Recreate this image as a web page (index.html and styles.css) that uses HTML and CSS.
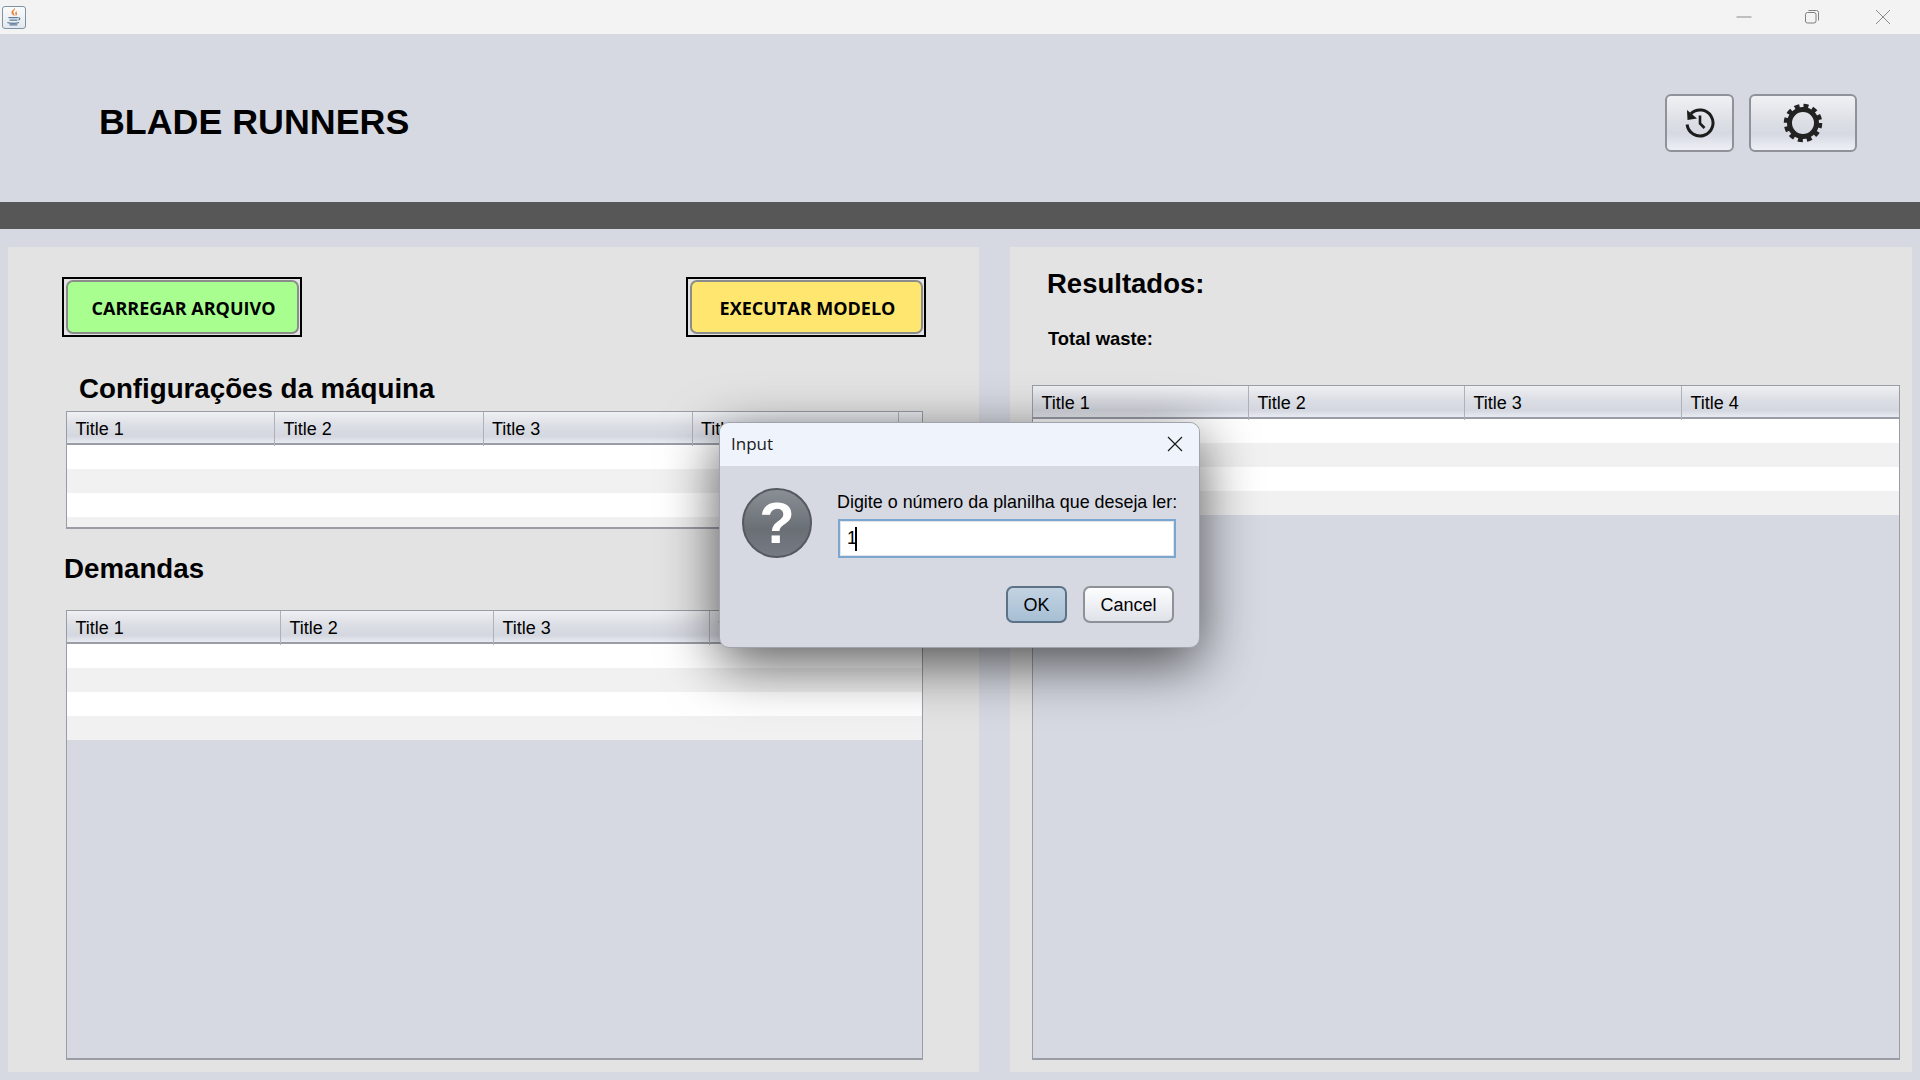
FILE: index.html
```html
<!DOCTYPE html>
<html lang="en">
<head>
    <meta charset="UTF-8">
    <title>Blade Runners</title>
    <link rel="stylesheet" href="styles.css">
</head>
<body>
    <div class="title-bar">
        <div class="app-icon">
            <svg width="20" height="20" viewBox="0 0 18 18">
                <path d="M9.500 0.500c1.500 2-2 3-1 5 .4.800 1 1.300 1 2.500-1.200-.4-3-1.700-2.700-3.500C7.100 3 9.800 2.300 9.500 0.500z" fill="#e8792b"/>
                <path d="M11.500 3.500c-1 .8-1.700 1.500-1.200 2.700.3.600.4 1.300 0 1.900 1-.5 1.800-1.400 1.200-2.700-.3-.7-.3-1.300 0-1.900z" fill="#e8792b"/>
                <path d="M4 9.500h8.500M12.800 9.700c1.700-.3 2 1.500.2 2.100M5 11.800h7M3 14c2.500 1 8 1 10.500 0M5 16h7" stroke="#5b7c9c" stroke-width="1.100" fill="none"/>
            </svg>
        </div>
        <div class="window-controls">
            <svg width="16" height="16" viewBox="0 0 16 16"><path d="M0.500 8h15" stroke="#8b8b8b" fill="none"/></svg>
            <svg width="16" height="16" viewBox="0 0 16 16"><rect x="1.500" y="3.500" width="10.500" height="10.500" rx="2" stroke="#7f7f7f" fill="none"/><path d="M4.500 1.500h8a2 2 0 0 1 2 2v8" stroke="#7f7f7f" fill="none"/></svg>
            <svg class="close-icon" width="16" height="16" viewBox="0 0 16 16"><path d="M1 1l14 14M15 1L1 15" stroke="#8b8b8b" fill="none"/></svg>
        </div>
    </div>

    <header class="app-header">
        <h1 class="app-title">BLADE RUNNERS</h1>
        <div class="header-actions">
            <button class="tool-button history-button">
                <svg width="32" height="32" viewBox="0 0 32 32">
                    <path d="M7 6.600A13 13 0 1 1 3.100 17.500" stroke="#1c1c1c" stroke-width="3" fill="none"/>
                    <path d="M3 3l.5 10 9.500-1.500z" fill="#1c1c1c"/>
                    <path d="M16 8.500v8l4.500 4.500" stroke="#1c1c1c" stroke-width="2.600" fill="none"/>
                </svg>
            </button>
            <button class="tool-button settings-button">
                <svg width="40" height="40" viewBox="0 0 40 40">
                    <circle cx="20" cy="20" r="13.500" stroke="#222" stroke-width="5" fill="none"/>
                    <circle cx="20" cy="20" r="17" stroke="#222" stroke-width="4.500" fill="none" stroke-dasharray="4.900 4.000"/>
                </svg>
            </button>
        </div>
    </header>

    <div class="dark-band"></div>

    <main class="content">
        <section class="panel left-panel">
            <div class="action-row">
                <div class="action-frame"><button class="action-button load-button">CARREGAR ARQUIVO</button></div>
                <div class="action-frame"><button class="action-button run-button">EXECUTAR MODELO</button></div>
            </div>
            <h2 class="section-title config-title">Configurações da máquina</h2>
            <div class="data-table config-table">
                <div class="table-head">
                    <div class="head-cell">Title 1</div>
                    <div class="head-cell">Title 2</div>
                    <div class="head-cell">Title 3</div>
                    <div class="head-cell">Title 4</div>
                    <div class="head-cell"></div>
                </div>
                <div class="table-row"></div>
                <div class="table-row alt"></div>
                <div class="table-row"></div>
                <div class="table-row alt"></div>
            </div>
            <h2 class="section-title demand-title">Demandas</h2>
            <div class="data-table demand-table">
                <div class="table-head">
                    <div class="head-cell">Title 1</div>
                    <div class="head-cell">Title 2</div>
                    <div class="head-cell">Title 3</div>
                    <div class="head-cell">Title 4</div>
                </div>
                <div class="table-row"></div>
                <div class="table-row alt"></div>
                <div class="table-row"></div>
                <div class="table-row alt"></div>
            </div>
        </section>

        <section class="panel right-panel">
            <h2 class="section-title results-title">Resultados:</h2>
            <div class="total-waste">Total waste:</div>
            <div class="data-table results-table">
                <div class="table-head">
                    <div class="head-cell">Title 1</div>
                    <div class="head-cell">Title 2</div>
                    <div class="head-cell">Title 3</div>
                    <div class="head-cell">Title 4</div>
                </div>
                <div class="table-row"></div>
                <div class="table-row alt"></div>
                <div class="table-row"></div>
                <div class="table-row alt"></div>
            </div>
        </section>
    </main>

    <!-- Input dialog -->
    <div class="dialog">
        <div class="dialog-title">
            <span>Input</span>
            <svg width="16" height="16" viewBox="0 0 16 16"><path d="M1 1l14 14M15 1L1 15" stroke="#1a1a1a" stroke-width="1.200" fill="none"/></svg>
        </div>
        <div class="dialog-body">
            <div class="question-icon">?</div>
            <div class="dialog-form">
                <label class="dialog-label">Digite o número da planilha que deseja ler:</label>
                <div class="dialog-input"><span>1</span><i class="caret"></i></div>
            </div>
        </div>
        <div class="dialog-buttons">
            <button class="dialog-button ok-button">OK</button>
            <button class="dialog-button">Cancel</button>
        </div>
    </div>
</body>
</html>
```

FILE: styles.css
```css
* {
    box-sizing: border-box;
}

body {
    margin: 0;
    width: 1920px;
    height: 1080px;
    overflow: hidden;
    display: flex;
    flex-direction: column;
    background-color: #d6d9e2;
    color: #000;
    font-family: "Liberation Sans", Arial, sans-serif;
}

button {
    font-family: inherit;
    padding: 0;
}

/* Window title bar */
.title-bar {
    height: 34px;
    flex: none;
    background-color: #f3f3f3;
    display: flex;
    align-items: center;
    justify-content: space-between;
    padding: 0 29px 0 2px;
}

.app-icon {
    width: 24px;
    height: 23px;
    border: 1px solid #7d93a8;
    border-radius: 3px;
    background: linear-gradient(#fbfbfb, #e4e8ee);
    display: flex;
    align-items: center;
    justify-content: center;
}

.window-controls {
    display: flex;
    gap: 52px;
}

.close-icon {
    margin-left: 3px;
}

/* Header */
.app-header {
    height: 168px;
    flex: none;
    display: flex;
    align-items: center;
    justify-content: space-between;
    padding: 9px 63px 0 99px;
}

.app-title {
    margin: 0;
    font-size: 35.800px;
    font-weight: bold;
}

.header-actions {
    display: flex;
    gap: 15px;
}

.tool-button {
    height: 58px;
    border: 2px solid #8f9298;
    border-radius: 6px;
    background: linear-gradient(#f0f1f4, #dcdee5 50%, #d6d9e2 70%, #eef0f6);
    display: flex;
    align-items: center;
    justify-content: center;
}

.history-button {
    width: 69px;
}

.settings-button {
    width: 108px;
}

.dark-band {
    height: 27px;
    flex: none;
    background-color: #575757;
}

/* Panels */
.content {
    flex: 1;
    display: flex;
    gap: 31px;
    padding: 18px 8px 8px 8px;
    min-height: 0;
}

.panel {
    background-color: #e3e3e3;
    display: flex;
    flex-direction: column;
}

.left-panel {
    width: 971px;
    padding: 30px 56px 12px 58px;
}

.right-panel {
    flex: 1;
    padding: 0 12px 12px 22px;
}

.action-row {
    height: 60px;
    flex: none;
    display: flex;
    justify-content: space-between;
    margin: 0 -3px 0 -4px;
}

.action-frame {
    width: 240px;
    height: 60px;
    border: 2px solid #000;
    padding: 1px 1px 1px 2px;
}

.action-button {
    width: 100%;
    height: 100%;
    border: 2px solid #8b8d8b;
    border-radius: 7px;
    padding: 2px 0 0 2px;
    font-family: "Open Sans", sans-serif;
    font-size: 18px;
    font-weight: bold;
    color: #000;
}

.load-button {
    background-color: #a8ff90;
}

.run-button {
    background-color: #ffe76f;
}

.section-title {
    margin: 0;
    font-size: 27.700px;
    font-weight: bold;
}

.config-title {
    height: 74px;
    flex: none;
    margin-left: 13px;
    padding-top: 36px;
    line-height: 32px;
}

.demand-title {
    height: 81px;
    flex: none;
    margin-left: -2px;
    padding-top: 24px;
    line-height: 32px;
}

.results-title {
    margin-left: 15px;
    height: 55px;
    flex: none;
    padding-top: 21px;
    font-size: 27.500px;
    line-height: 32px;
}

.total-waste {
    margin-left: 16px;
    height: 83px;
    flex: none;
    padding-top: 26px;
    font-size: 18.400px;
    font-weight: bold;
    line-height: 21px;
}

/* Tables */
.data-table {
    border: 1px solid #9a9da6;
    border-bottom-width: 2px;
    background-color: #d6d9e2;
    overflow: hidden;
}

.config-table {
    height: 118px;
    flex: none;
}

.demand-table,
.results-table {
    flex: 1;
}

.table-head {
    height: 33px;
    display: grid;
    border-bottom: 2px solid #9a9da6;
    background: linear-gradient(#eef0f3, #dcdee5 45%, #d4d7df 78%, #e8ebf1);
}

.config-table .table-head {
    grid-template-columns: 208px 208.500px 209px 206px 1fr;
}

.demand-table .table-head {
    grid-template-columns: 214px 213px 216px 1fr;
}

.results-table .table-head {
    grid-template-columns: 216px 216px 217px 1fr;
}

.head-cell {
    border-right: 1px solid #aeb1ba;
    padding-left: 8.500px;
    padding-top: 1px;
    font-size: 18px;
    line-height: 33px;
}

.head-cell:last-child {
    border-right: none;
}

.table-row {
    height: 24px;
    background-color: #fff;
}

.table-row.alt {
    background-color: #f1f1f1;
}

/* Dialog */
.dialog {
    position: absolute;
    left: 719px;
    top: 422px;
    width: 481px;
    height: 226px;
    border: 1px solid #a0a3ab;
    border-radius: 10px;
    background-color: #d6d9e2;
    box-shadow: 0 16px 56px rgba(0, 0, 0, 0.65);
    overflow: hidden;
    display: flex;
    flex-direction: column;
}

.dialog-title {
    height: 43px;
    flex: none;
    background-color: #eff3fb;
    display: flex;
    align-items: center;
    justify-content: space-between;
    padding: 0 16px 2px 11px;
    font-family: "Open Sans", sans-serif;
    font-size: 17px;
    color: #1a1a1a;
}

.dialog-body {
    display: flex;
    padding: 22px 0 0 22px;
}

.question-icon {
    width: 70px;
    height: 70px;
    flex: none;
    border-radius: 50%;
    border: 2px solid #56595f;
    background: linear-gradient(#8a8e95, #6a6e75 60%, #767a82);
    color: #fff;
    font-size: 58px;
    font-weight: bold;
    line-height: 66px;
    text-align: center;
}

.dialog-form {
    margin-left: 25px;
}

.dialog-label {
    display: block;
    font-size: 17.900px;
    line-height: 20px;
    margin-top: 4px;
    white-space: nowrap;
}

.dialog-input {
    width: 338px;
    height: 39px;
    margin: 7px 0 0 1px;
    border: 2px solid #7ba6d0;
    box-shadow: inset 0 0 0 1px #e2e4e8;
    background-color: #fff;
    display: flex;
    align-items: center;
    padding-left: 7px;
    font-size: 18px;
}

.caret {
    width: 2px;
    height: 24px;
    background-color: #000;
    margin-left: -2px;
}

.dialog-buttons {
    display: flex;
    justify-content: flex-end;
    gap: 16px;
    padding: 28px 25px 0 0;
}

.dialog-button {
    width: 91px;
    height: 37px;
    border: 2px solid #8e9197;
    border-radius: 7px;
    padding-top: 2px;
    background: linear-gradient(#fdfdfe, #eef0f4 50%, #dfe2e8);
    font-size: 18px;
    color: #000;
}

.ok-button {
    width: 61px;
    border-color: #5d7286;
    background: linear-gradient(#c2d3e2, #a7bfd4);
}
```
